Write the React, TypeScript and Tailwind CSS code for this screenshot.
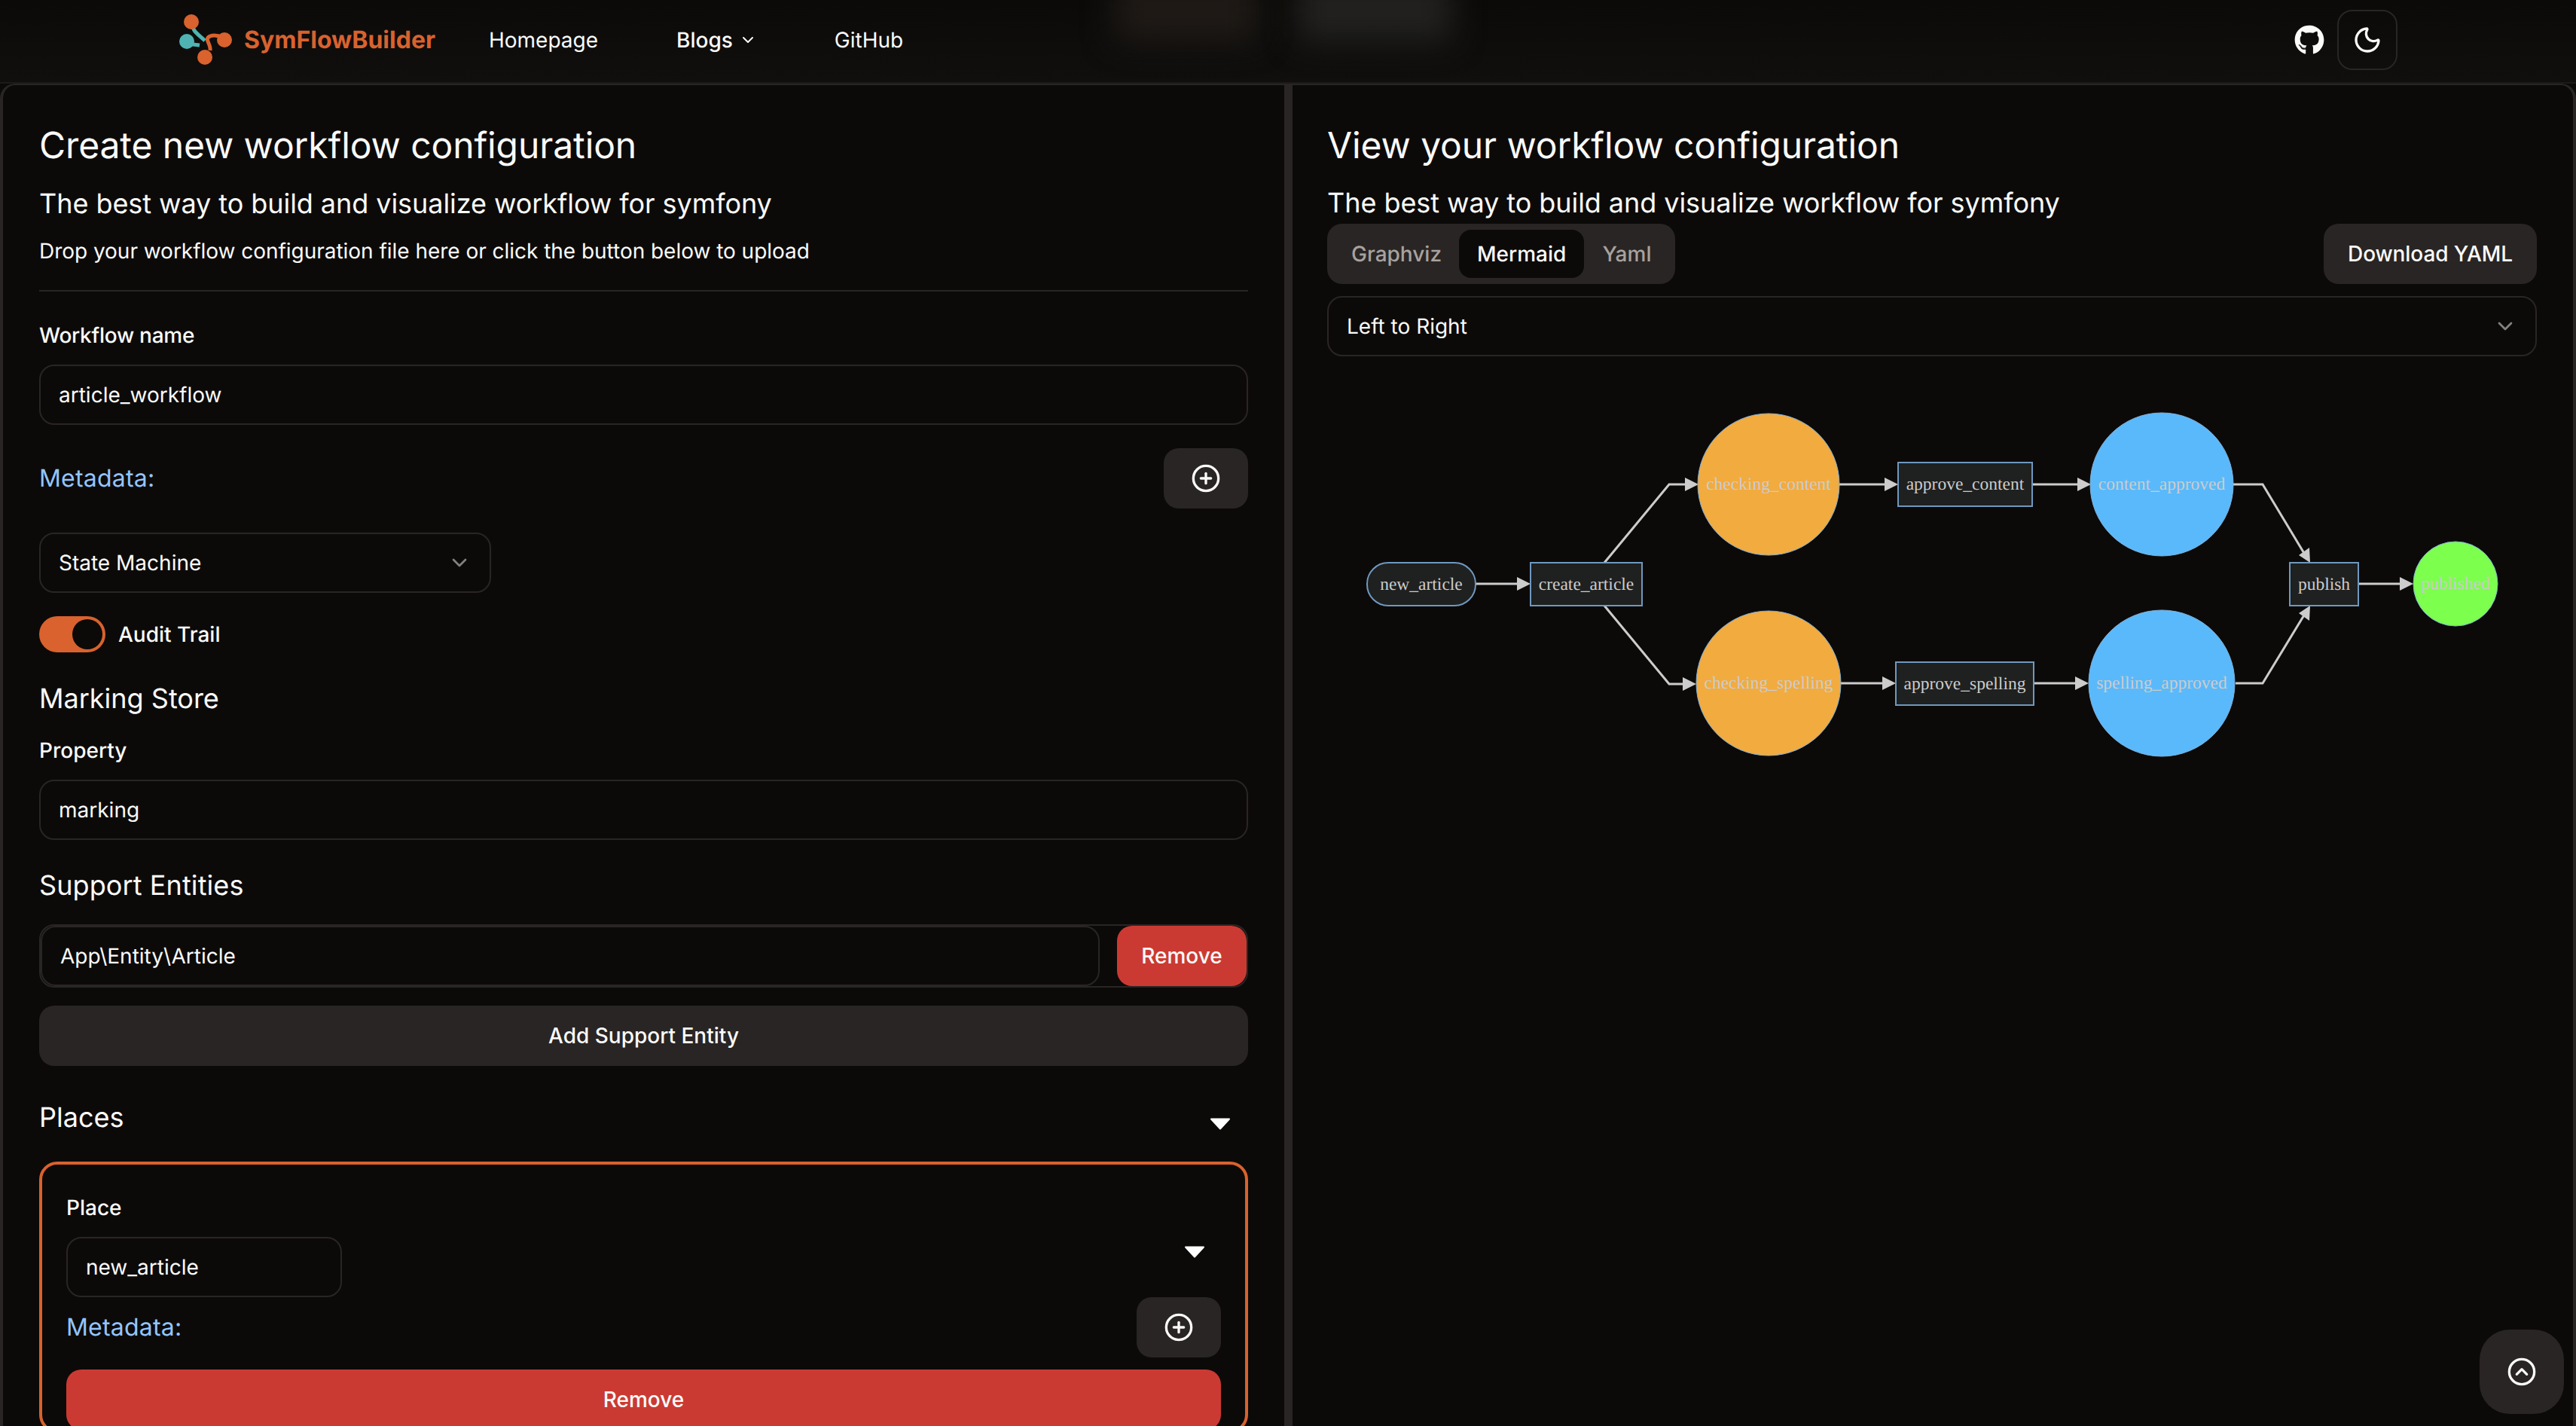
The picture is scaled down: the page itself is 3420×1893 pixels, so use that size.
import { ChevronDown, CircleChevronUp, CirclePlus, Moon } from "lucide-react";
import { FaGithub } from "react-icons/fa";

const inputClass =
  "flex h-[80px] items-center rounded-[20px] border-2 border-[#292524] px-[24px] text-[28px]";

const Logo = () => (
  <svg width="72" height="72" viewBox="0 0 72 72" className="shrink-0">
    <path d="M18 12 C20 26 27 28 36 37" fill="none" stroke="#4fb3b3" strokeWidth="5" />
    <circle cx="12" cy="38" r="10" fill="#4fb3b3" />
    <path d="M12 41 L29 43" fill="none" stroke="#4fb3b3" strokeWidth="5" />
    <circle cx="18" cy="12" r="10" fill="#d9622e" />
    <circle cx="62" cy="36" r="10" fill="#d9622e" />
    <circle cx="36" cy="59" r="10" fill="#d9622e" />
    <path d="M60 33 C52 29 44 29 40 33 C37 37 44 42 43 50" fill="none" stroke="#d9622e" strokeWidth="5" />
  </svg>
);

const Triangle = () => (
  <svg width="28" height="16" viewBox="0 0 28 16" className="shrink-0">
    <path d="M2 1.5 H26 L14 14.5 Z" fill="#ffffff" stroke="#ffffff" strokeWidth="2" strokeLinejoin="round" />
  </svg>
);

const Select = ({ label, className }: { label: string; className: string }) => (
  <div className={`${inputClass} justify-between ${className}`}>
    <span>{label}</span>
    <ChevronDown size={32} strokeWidth={2} className="opacity-50" />
  </div>
);

const PlusButton = () => (
  <button className="flex h-[80px] w-[112px] items-center justify-center rounded-[20px] bg-[#292524]">
    <CirclePlus size={40} strokeWidth={2} />
  </button>
);

const Arrow = ({ d, head }: { d: string; head: string }) => (
  <g>
    <path d={d} fill="none" stroke="#cccccc" strokeWidth="3" />
    <polygon points={head} fill="#cccccc" />
  </g>
);

const Box = ({ x, y, w, h, label, rx = 0 }: { x: number; y: number; w: number; h: number; label: string; rx?: number }) => (
  <g>
    <rect x={x} y={y} width={w} height={h} rx={rx} fill="#1f2020" stroke="#6f98bf" strokeWidth="2" />
    <text x={x + w / 2} y={y + h / 2 + 7} textAnchor="middle" fill="#cccccc" fontSize="23.5">
      {label}
    </text>
  </g>
);

const Place = ({ cx, cy, r, fill, label }: { cx: number; cy: number; r: number; fill: string; label: string }) => (
  <g>
    <circle cx={cx} cy={cy} r={r} fill={fill} stroke="#81b1db" strokeWidth="1" />
    <text x={cx} y={cy + 7} textAnchor="middle" fill="#cccccc" fontSize="23.5">
      {label}
    </text>
  </g>
);

const Graph = () => (
  <svg
    width="1604"
    height="500"
    viewBox="1764 520 1604 500"
    className="ml-[2px] mt-[47px] block font-['Liberation_Serif',serif]"
  >
    <Arrow d="M1959 775 H2014" head="2014,766 2032,775 2014,784" />
    <Arrow d="M2130 747 L2216 643 H2237" head="2237,634 2255,643 2237,652" />
    <Arrow d="M2130 804 L2216 908 H2234" head="2234,899 2252,908 2234,917" />
    <Arrow d="M2442 643 H2502" head="2502,634 2520,643 2502,652" />
    <Arrow d="M2444 907 H2499" head="2499,898 2517,907 2499,916" />
    <Arrow d="M2698 643 H2758" head="2758,634 2776,643 2758,652" />
    <Arrow d="M2700 907 H2755" head="2755,898 2773,907 2755,916" />
    <Arrow d="M2964 643 H3004 L3060 736" head="3067,747 3052,737 3066,727" />
    <Arrow d="M2968 907 H3004 L3060 815" head="3067,804 3052,814 3066,824" />
    <Arrow d="M3131 775 H3186" head="3186,766 3204,775 3186,784" />
    <Box x={1815} y={747} w={144} h={57} rx={28} label="new_article" />
    <Box x={2032} y={747} w={148} h={57} label="create_article" />
    <Box x={2520} y={614} w={178} h={58} label="approve_content" />
    <Box x={2517} y={879} w={183} h={57} label="approve_spelling" />
    <Box x={3040} y={747} w={91} h={57} label="publish" />
    <Place cx={2348} cy={643} r={94} fill="#f2ab3e" label="checking_content" />
    <Place cx={2348} cy={907} r={96} fill="#f2ab3e" label="checking_spelling" />
    <Place cx={2870} cy={643} r={95} fill="#5ab9fa" label="content_approved" />
    <Place cx={2870} cy={907} r={97} fill="#5ab9fa" label="spelling_approved" />
    <Place cx={3260} cy={775} r={56} fill="#7cff4d" label="published" />
  </svg>
);

const App = () => {
  return (
    <div className="relative h-[1893px] w-[3420px] overflow-hidden bg-[#0c0a09] font-['Inter',sans-serif] text-[#fafaf9] antialiased [text-rendering:geometricPrecision]">
      {/* header */}
      <header className="relative flex h-[111px] items-center overflow-hidden border-b-2 border-[#1c1a19] bg-gradient-to-b from-[#0b0a09] to-[#100f0e] pb-[3px] pl-[236px]">
        <div className="absolute left-[1480px] top-[-30px] h-[85px] w-[190px] bg-[#1f1a16] blur-[20px]" />
        <div className="absolute left-[1722px] top-[-30px] h-[85px] w-[205px] bg-[#22211f] blur-[20px]" />
        <Logo />
        <span className="ml-[16px] text-[32px] font-bold text-[#d9622e]">SymFlowBuilder</span>
        <nav className="ml-[71px] flex items-center text-[28px]">
          <span>Homepage</span>
          <span className="ml-[104px] flex items-center font-medium">
            Blogs
            <ChevronDown size={24} strokeWidth={2} className="ml-[8px]" />
          </span>
          <span className="ml-[103px]">GitHub</span>
        </nav>
        <div className="absolute left-[3046px] top-[13px] flex items-center gap-[17px]">
          <FaGithub size={40} />
          <button className="flex h-[80px] w-[80px] items-center justify-center rounded-[20px] border-2 border-[#292524]">
            <Moon size={40} strokeWidth={2} />
          </button>
        </div>
      </header>

      <div className="flex">
        {/* left panel */}
        <section className="h-[1800px] w-[1709px] shrink-0 rounded-tl-[20px] border-x-4 border-t-2 border-[#292524] px-[48px] pt-[56px]">
          <h2 className="text-[48px] leading-[48px] tracking-[-0.1px]">Create new workflow configuration</h2>
          <h3 className="mt-[25px] text-[36px] leading-[56px] tracking-[-0.06px]">The best way to build and visualize workflow for symfony</h3>
          <p className="mt-[15px] text-[28px] leading-[40px] tracking-[-0.03px]">Drop your workflow configuration file here or click the button below to upload</p>
          <div className="mt-[32px] h-[2px] bg-[#292524]" />

          <label className="mt-[38px] block text-[28px] font-medium leading-[40px] tracking-[-0.25px]">Workflow name</label>
          <div className={`${inputClass} mt-[19px]`}>article_workflow</div>

          <div className="mt-[31px] flex items-center justify-between">
            <span className="text-[32px] tracking-[0.2px] text-[#93c5fd]">Metadata:</span>
            <PlusButton />
          </div>

          <Select label="State Machine" className="mt-[32px] w-[600px]" />

          <div className="mt-[31px] flex items-center">
            <div className="flex h-[48px] w-[88px] items-center justify-end rounded-full bg-[#d9622e] pr-[4px]">
              <div className="h-[40px] w-[40px] rounded-full bg-[#0c0a09]" />
            </div>
            <span className="ml-[17px] text-[28px] font-medium">Audit Trail</span>
          </div>

          <h4 className="mt-[33px] text-[36px] leading-[56px]">Marking Store</h4>
          <label className="mt-[21px] block text-[28px] font-medium leading-[40px]">Property</label>
          <div className={`${inputClass} mt-[19px]`}>marking</div>

          <h4 className="mt-[32px] text-[36px] leading-[56px] tracking-[0.1px]">Support Entities</h4>
          <div className="mt-[24px] flex h-[84px] items-center justify-between rounded-[20px] border-2 border-[#292524]">
            <div className={`${inputClass} w-[1406px]`}>App\Entity\Article</div>
            <button className="h-[80px] w-[172px] rounded-[20px] bg-[#cb3a32] text-[28px] font-medium">Remove</button>
          </div>
          <button className="mt-[24px] h-[80px] w-full rounded-[20px] bg-[#292524] text-[28px] font-medium">Add Support Entity</button>

          <div className="mt-[40px] flex h-[56px] items-center justify-between pr-[23px]">
            <h4 className="text-[36px] leading-[56px]">Places</h4>
            <div className="pt-[18px]">
              <Triangle />
            </div>
          </div>

          <div className="mt-[31px] rounded-[24px] border-4 border-[#d9622e] px-[32px] pt-[37px]">
            <label className="block text-[28px] font-medium leading-[40px]">Place</label>
            <div className="mt-[19px] flex items-start justify-between pr-[21px]">
              <div className={`${inputClass} w-[366px]`}>new_article</div>
              <div className="pt-[12px]">
                <Triangle />
              </div>
            </div>
            <div className="flex items-center justify-between">
              <span className="text-[32px] tracking-[0.2px] text-[#93c5fd]">Metadata:</span>
              <PlusButton />
            </div>
            <button className="mt-[16px] h-[80px] w-full rounded-[20px] bg-[#cb3a32] text-[28px] font-medium">Remove</button>
          </div>
        </section>

        <div className="w-[3px] shrink-0 bg-[#292524]" />

        {/* right panel */}
        <section className="h-[1800px] flex-1 rounded-tr-[20px] border-x-4 border-t-2 border-[#292524] pl-[46px] pr-[48px] pt-[56px]">
          <h2 className="text-[48px] leading-[48px] tracking-[-0.1px]">View your workflow configuration</h2>
          <h3 className="mt-[25px] text-[36px] leading-[55px] tracking-[-0.06px]">The best way to build and visualize workflow for symfony</h3>
          <div className="flex items-center justify-between">
            <div className="flex h-[80px] items-center rounded-[20px] bg-[#292524] p-[8px] text-[28px] font-medium">
              <span className="pl-[24px] pr-[23px] text-[#a8a29e]">Graphviz</span>
              <span className="flex h-[64px] items-center rounded-[16px] bg-[#0c0a09] px-[24px]">Mermaid</span>
              <span className="px-[24px] text-[#a8a29e]">Yaml</span>
            </div>
            <button className="h-[80px] rounded-[20px] bg-[#292524] px-[32px] text-[28px] font-medium tracking-[-0.1px]">Download YAML</button>
          </div>
          <Select label="Left to Right" className="mt-[16px]" />
          <Graph />
        </section>
      </div>

      {/* scroll to top */}
      <button className="absolute left-[3292px] top-[1765px] flex h-[112px] w-[112px] items-center justify-center rounded-[40px] bg-[#292524]">
        <CircleChevronUp size={40} strokeWidth={2} />
      </button>
    </div>
  );
};

export default App;
